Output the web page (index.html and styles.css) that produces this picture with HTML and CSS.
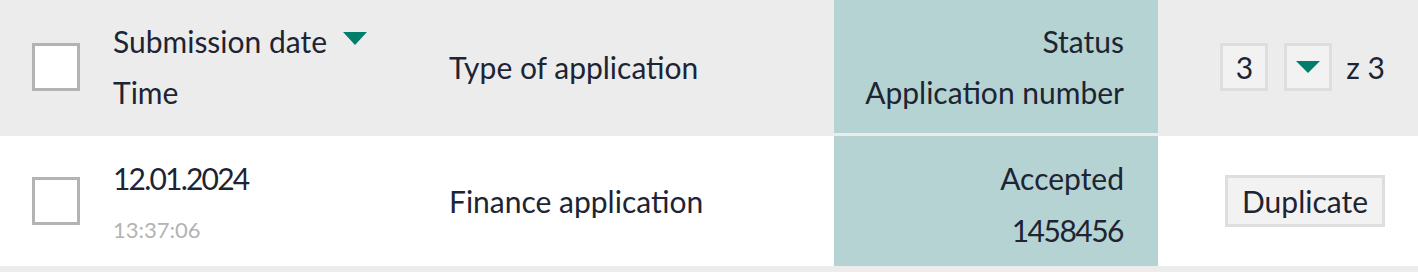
FILE: index.html
```html
<!DOCTYPE html>
<html lang="en">
<head>
  <meta charset="UTF-8">
  <meta name="viewport" content="width=device-width, initial-scale=1.0">
  <link rel="stylesheet" href="styles.css">
  <title>Applications</title>
</head>
<body>
  <div class="table">
    <div class="row head">
      <div class="cell check"><span class="box"></span></div>
      <div class="cell two">
        <span class="sort">Submission date <i class="tri"></i></span>
        <span>Time</span>
      </div>
      <div class="cell">Type of application</div>
      <div class="cell two status">
        <span>Status</span>
        <span>Application number</span>
      </div>
      <div class="cell actions">
        <div class="pager">
          <span class="pbox">3</span>
          <span class="pbox"><i class="tri"></i></span>
          <span class="of">z 3</span>
        </div>
      </div>
    </div>

    <div class="row item">
      <div class="cell check"><span class="box"></span></div>
      <div class="cell two">
        <span class="date">12.01.2024</span>
        <span class="time">13:37:06</span>
      </div>
      <div class="cell">Finance application</div>
      <div class="cell two status">
        <span>Accepted</span>
        <span class="num">1458456</span>
      </div>
      <div class="cell actions">
        <button class="btn">Duplicate</button>
      </div>
    </div>
  </div>
</body>
</html>
```

FILE: styles.css
```css
*{
  margin: 0;
  padding: 0;
  box-sizing: border-box;
}
body{
  background-color: #ececec;
  font-family: Lato, "Open Sans", sans-serif;
  color: #1d2433;
  font-size: 30px;
}

.row{
  display: grid;
  grid-template-columns: 113px 336px 385px 324px 1fr;
}
.head{
  height: 133px;
  background-color: #ececec;
}
.item{
  height: 130px;
  margin-top: 3px;
  background-color: #fff;
}

.cell{
  display: flex;
  align-items: center;
}
.two{
  flex-direction: column;
  justify-content: center;
  align-items: flex-start;
  line-height: 51px;
}
.item .two{
  line-height: 52px;
  padding-top: 6px;
}

.check{
  padding-left: 32px;
}
.box{
  width: 48px;
  height: 48px;
  border: 3px solid #b3b3b3;
  background-color: #fff;
}

.sort{
  display: flex;
  align-items: center;
}
.tri{
  display: inline-block;
  width: 0;
  height: 0;
  border-left: 12px solid transparent;
  border-right: 12px solid transparent;
  border-top: 13px solid #007d6b;
}
.sort .tri{
  margin-left: 16px;
  margin-top: -6px;
}

.status{
  background-color: #b4d3d2;
  align-items: flex-end;
  padding-right: 34px;
}

.date{
  letter-spacing: -1.8px;
}
.num{
  letter-spacing: -1.5px;
  margin-right: 1px;
}
.time{
  font-size: 22px;
  color: #b3b3b3;
}

.actions{
  justify-content: flex-end;
  padding-right: 33px;
}
.pager{
  display: flex;
  align-items: center;
  gap: 16px;
}
.pbox{
  width: 48px;
  height: 48px;
  border: 3px solid #dedede;
  background-color: #f2f2f2;
  display: flex;
  align-items: center;
  justify-content: center;
}
.pbox .tri{
  border-top-width: 12px;
}
.of{
  margin-left: -2px;
}

.btn{
  font: inherit;
  color: inherit;
  height: 52px;
  padding: 0 14px;
  border: 3px solid #dedede;
  background-color: #f2f2f2;
}
```
